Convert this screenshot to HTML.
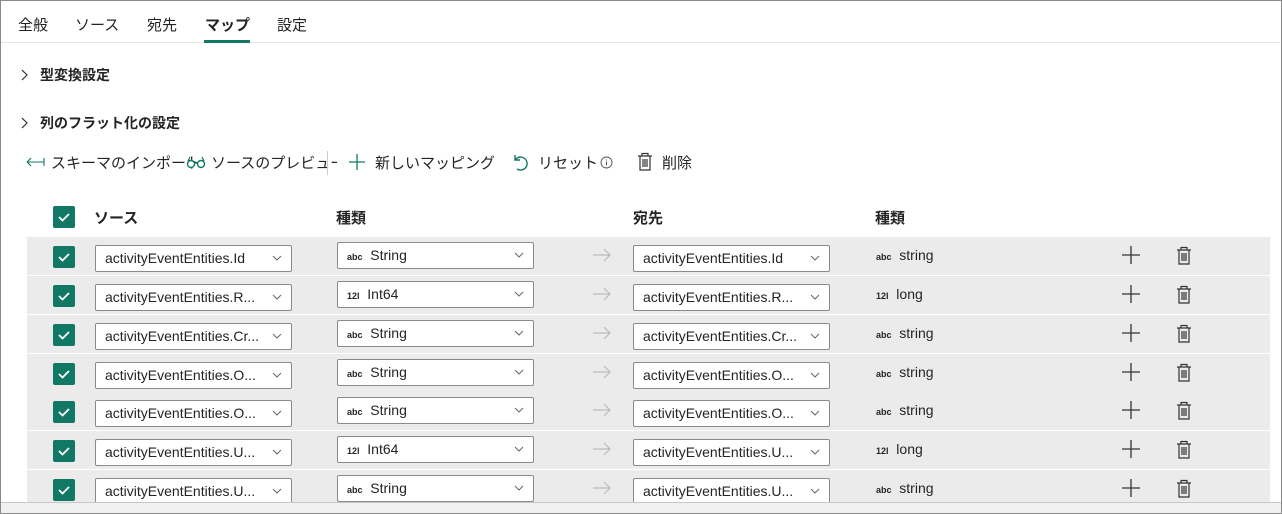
<!DOCTYPE html>
<html><head><meta charset="utf-8"><style>
*{box-sizing:border-box;margin:0;padding:0}
body{width:1282px;height:514px;overflow:hidden;background:#fff;font-family:"Liberation Sans","Noto Sans CJK JP",sans-serif;color:#242424;position:relative}
.frame{position:absolute;left:0;top:0;width:1282px;height:514px;border:1px solid #8a8a8a}
.a{position:absolute;white-space:nowrap}
.tab{font-size:15px;top:14px}
.row{position:absolute;left:27px;width:1243px;height:38px;background:#ebebeb}
.cb{position:absolute;left:26px;top:9px;width:22px;height:22px;background:#117865;border-radius:2px}
.cb svg{position:absolute;left:4px;top:5px}
.dd{position:absolute;width:197px;height:27px;background:#fff;border:1px solid #8a8a8a;border-radius:2px;font-size:14px;line-height:25px;padding-left:9px;color:#242424}
.dd .ch{position:absolute;right:9px;top:9px}
.ic{font-size:9px;font-weight:bold;letter-spacing:0}
</style></head><body>
<div class="frame"></div>
<div class="a tab" style="left:18px">全般</div>
<div class="a tab" style="left:75px">ソース</div>
<div class="a tab" style="left:147px">宛先</div>
<div class="a tab" style="left:205px;font-weight:bold">マップ</div>
<div class="a tab" style="left:277px">設定</div>
<div class="a" style="left:1px;top:42px;width:1280px;height:1px;background:#e6e6e6"></div>
<div class="a" style="left:204px;top:40px;width:46px;height:3px;background:#117865"></div>

<svg class="a" style="left:20px;top:68px" width="10" height="14"><path d="M2 2l5 5-5 5" fill="none" stroke="#333" stroke-width="1.2"/></svg>
<div class="a" style="left:40px;top:65px;font-size:14px;font-weight:bold">型変換設定</div>
<svg class="a" style="left:20px;top:116px" width="10" height="14"><path d="M2 2l5 5-5 5" fill="none" stroke="#333" stroke-width="1.2"/></svg>
<div class="a" style="left:40px;top:113px;font-size:14px;font-weight:bold">列のフラット化の設定</div>

<svg class="a" style="left:26px;top:156px" width="20" height="12"><path d="M1 6h17M1 6l4-4M1 6l4 4M18 2v8" fill="none" stroke="#117865" stroke-width="1.1"/></svg>
<div class="a" style="left:51px;top:152px;font-size:15px">スキーマのインポート</div>
<svg class="a" style="left:186px;top:155px" width="20" height="14"><circle cx="5" cy="9" r="3.5" fill="#fff" stroke="#117865" stroke-width="1.4"/><circle cx="15" cy="9" r="3.5" fill="#fff" stroke="#117865" stroke-width="1.4"/><path d="M8.5 8h3M2 6l2-4M18 6l-2-4" fill="none" stroke="#117865" stroke-width="1.2"/></svg>
<div class="a" style="left:211px;top:152px;font-size:15px;width:126px;overflow:hidden">ソースのプレビュー</div>
<div class="a" style="left:327px;top:151px;width:1px;height:24px;background:#ccc"></div>
<svg class="a" style="left:348px;top:153px" width="18" height="18"><path d="M9 1v16M1 9h16" stroke="#117865" stroke-width="1.3"/></svg>
<div class="a" style="left:375px;top:152px;font-size:15px">新しいマッピング</div>
<svg class="a" style="left:511px;top:153px" width="20" height="19"><path d="M4 2v5h5M4.5 6.5A6.5 6.5 0 1 1 6 16" fill="none" stroke="#117865" stroke-width="1.4"/></svg>
<div class="a" style="left:538px;top:152px;font-size:15px">リセット</div>
<svg class="a" style="left:600px;top:156px" width="13" height="13"><circle cx="6.5" cy="6.5" r="5.5" fill="none" stroke="#555" stroke-width="0.9"/><path d="M6.5 5.5v4M6.5 3.5v1" stroke="#555" stroke-width="1"/></svg>
<svg class="a" style="left:637px;top:152px" width="16" height="20"><path d="M1 4h14M5 4V1.5h6V4M3 4v14h10V4M6 7v8M8 7v8M10 7v8" fill="none" stroke="#333" stroke-width="1.2"/></svg>
<div class="a" style="left:662px;top:152px;font-size:15px">削除</div>

<div class="a cb" style="left:53px;top:206px"><svg width="14" height="12"><path d="M2 6l3.5 3.5L12 3" fill="none" stroke="#fff" stroke-width="1.8"/></svg></div>
<div class="a" style="left:94px;top:207px;font-size:15px;font-weight:bold">ソース</div>
<div class="a" style="left:336px;top:207px;font-size:15px;font-weight:bold">種類</div>
<div class="a" style="left:633px;top:207px;font-size:15px;font-weight:bold">宛先</div>
<div class="a" style="left:875px;top:207px;font-size:15px;font-weight:bold">種類</div>

<div id="rows"></div>
<script></script>
<!-- rows -->
<div class="row" style="top:237px"><div class="cb"><svg width="14" height="12"><path d="M2 6l3.5 3.5L12 3" fill="none" stroke="#fff" stroke-width="1.8"/></svg></div>
<div class="dd" style="left:68px;top:8px">activityEventEntities.Id<svg class="ch" width="10" height="7"><path d="M1 1l4 4 4-4" fill="none" stroke="#666"/></svg></div>
<div class="dd" style="left:310px;top:5px"><span class="ic">abc</span>&nbsp; String<svg class="ch" width="10" height="7"><path d="M1 1l4 4 4-4" fill="none" stroke="#666"/></svg></div>
<svg class="a" style="left:565px;top:11px" width="20" height="14"><path d="M1 7h17M12 1l6 6-6 6" fill="none" stroke="#bbb" stroke-width="1.2"/></svg>
<div class="dd" style="left:606px;top:8px">activityEventEntities.Id<svg class="ch" width="10" height="7"><path d="M1 1l4 4 4-4" fill="none" stroke="#666"/></svg></div>
<div class="a" style="left:849px;top:10px;font-size:14px"><span class="ic">abc</span>&nbsp; string</div>
<svg class="a" style="left:1095px;top:9px" width="18" height="18"><path d="M9 0v18M0 9h18" stroke="#333" stroke-width="1.3"/></svg>
<svg class="a" style="left:1149px;top:9px" width="16" height="20"><path d="M1 4h14M5 4V1.5h6V4M3 4v14h10V4M6 7v8M8 7v8M10 7v8" fill="none" stroke="#333" stroke-width="1.2"/></svg></div>

<div class="row" style="top:276px"><div class="cb"><svg width="14" height="12"><path d="M2 6l3.5 3.5L12 3" fill="none" stroke="#fff" stroke-width="1.8"/></svg></div>
<div class="dd" style="left:68px;top:8px">activityEventEntities.R...<svg class="ch" width="10" height="7"><path d="M1 1l4 4 4-4" fill="none" stroke="#666"/></svg></div>
<div class="dd" style="left:310px;top:5px"><span class="ic">12l</span>&nbsp; Int64<svg class="ch" width="10" height="7"><path d="M1 1l4 4 4-4" fill="none" stroke="#666"/></svg></div>
<svg class="a" style="left:565px;top:11px" width="20" height="14"><path d="M1 7h17M12 1l6 6-6 6" fill="none" stroke="#bbb" stroke-width="1.2"/></svg>
<div class="dd" style="left:606px;top:8px">activityEventEntities.R...<svg class="ch" width="10" height="7"><path d="M1 1l4 4 4-4" fill="none" stroke="#666"/></svg></div>
<div class="a" style="left:849px;top:10px;font-size:14px"><span class="ic">12l</span>&nbsp; long</div>
<svg class="a" style="left:1095px;top:9px" width="18" height="18"><path d="M9 0v18M0 9h18" stroke="#333" stroke-width="1.3"/></svg>
<svg class="a" style="left:1149px;top:9px" width="16" height="20"><path d="M1 4h14M5 4V1.5h6V4M3 4v14h10V4M6 7v8M8 7v8M10 7v8" fill="none" stroke="#333" stroke-width="1.2"/></svg></div>

<div class="row" style="top:315px"><div class="cb"><svg width="14" height="12"><path d="M2 6l3.5 3.5L12 3" fill="none" stroke="#fff" stroke-width="1.8"/></svg></div>
<div class="dd" style="left:68px;top:8px">activityEventEntities.Cr...<svg class="ch" width="10" height="7"><path d="M1 1l4 4 4-4" fill="none" stroke="#666"/></svg></div>
<div class="dd" style="left:310px;top:5px"><span class="ic">abc</span>&nbsp; String<svg class="ch" width="10" height="7"><path d="M1 1l4 4 4-4" fill="none" stroke="#666"/></svg></div>
<svg class="a" style="left:565px;top:11px" width="20" height="14"><path d="M1 7h17M12 1l6 6-6 6" fill="none" stroke="#bbb" stroke-width="1.2"/></svg>
<div class="dd" style="left:606px;top:8px">activityEventEntities.Cr...<svg class="ch" width="10" height="7"><path d="M1 1l4 4 4-4" fill="none" stroke="#666"/></svg></div>
<div class="a" style="left:849px;top:10px;font-size:14px"><span class="ic">abc</span>&nbsp; string</div>
<svg class="a" style="left:1095px;top:9px" width="18" height="18"><path d="M9 0v18M0 9h18" stroke="#333" stroke-width="1.3"/></svg>
<svg class="a" style="left:1149px;top:9px" width="16" height="20"><path d="M1 4h14M5 4V1.5h6V4M3 4v14h10V4M6 7v8M8 7v8M10 7v8" fill="none" stroke="#333" stroke-width="1.2"/></svg></div>

<div class="row" style="top:354px"><div class="cb"><svg width="14" height="12"><path d="M2 6l3.5 3.5L12 3" fill="none" stroke="#fff" stroke-width="1.8"/></svg></div>
<div class="dd" style="left:68px;top:8px">activityEventEntities.O...<svg class="ch" width="10" height="7"><path d="M1 1l4 4 4-4" fill="none" stroke="#666"/></svg></div>
<div class="dd" style="left:310px;top:5px"><span class="ic">abc</span>&nbsp; String<svg class="ch" width="10" height="7"><path d="M1 1l4 4 4-4" fill="none" stroke="#666"/></svg></div>
<svg class="a" style="left:565px;top:11px" width="20" height="14"><path d="M1 7h17M12 1l6 6-6 6" fill="none" stroke="#bbb" stroke-width="1.2"/></svg>
<div class="dd" style="left:606px;top:8px">activityEventEntities.O...<svg class="ch" width="10" height="7"><path d="M1 1l4 4 4-4" fill="none" stroke="#666"/></svg></div>
<div class="a" style="left:849px;top:10px;font-size:14px"><span class="ic">abc</span>&nbsp; string</div>
<svg class="a" style="left:1095px;top:9px" width="18" height="18"><path d="M9 0v18M0 9h18" stroke="#333" stroke-width="1.3"/></svg>
<svg class="a" style="left:1149px;top:9px" width="16" height="20"><path d="M1 4h14M5 4V1.5h6V4M3 4v14h10V4M6 7v8M8 7v8M10 7v8" fill="none" stroke="#333" stroke-width="1.2"/></svg></div>

<div class="row" style="top:392px"><div class="cb"><svg width="14" height="12"><path d="M2 6l3.5 3.5L12 3" fill="none" stroke="#fff" stroke-width="1.8"/></svg></div>
<div class="dd" style="left:68px;top:8px">activityEventEntities.O...<svg class="ch" width="10" height="7"><path d="M1 1l4 4 4-4" fill="none" stroke="#666"/></svg></div>
<div class="dd" style="left:310px;top:5px"><span class="ic">abc</span>&nbsp; String<svg class="ch" width="10" height="7"><path d="M1 1l4 4 4-4" fill="none" stroke="#666"/></svg></div>
<svg class="a" style="left:565px;top:11px" width="20" height="14"><path d="M1 7h17M12 1l6 6-6 6" fill="none" stroke="#bbb" stroke-width="1.2"/></svg>
<div class="dd" style="left:606px;top:8px">activityEventEntities.O...<svg class="ch" width="10" height="7"><path d="M1 1l4 4 4-4" fill="none" stroke="#666"/></svg></div>
<div class="a" style="left:849px;top:10px;font-size:14px"><span class="ic">abc</span>&nbsp; string</div>
<svg class="a" style="left:1095px;top:9px" width="18" height="18"><path d="M9 0v18M0 9h18" stroke="#333" stroke-width="1.3"/></svg>
<svg class="a" style="left:1149px;top:9px" width="16" height="20"><path d="M1 4h14M5 4V1.5h6V4M3 4v14h10V4M6 7v8M8 7v8M10 7v8" fill="none" stroke="#333" stroke-width="1.2"/></svg></div>

<div class="row" style="top:431px"><div class="cb"><svg width="14" height="12"><path d="M2 6l3.5 3.5L12 3" fill="none" stroke="#fff" stroke-width="1.8"/></svg></div>
<div class="dd" style="left:68px;top:8px">activityEventEntities.U...<svg class="ch" width="10" height="7"><path d="M1 1l4 4 4-4" fill="none" stroke="#666"/></svg></div>
<div class="dd" style="left:310px;top:5px"><span class="ic">12l</span>&nbsp; Int64<svg class="ch" width="10" height="7"><path d="M1 1l4 4 4-4" fill="none" stroke="#666"/></svg></div>
<svg class="a" style="left:565px;top:11px" width="20" height="14"><path d="M1 7h17M12 1l6 6-6 6" fill="none" stroke="#bbb" stroke-width="1.2"/></svg>
<div class="dd" style="left:606px;top:8px">activityEventEntities.U...<svg class="ch" width="10" height="7"><path d="M1 1l4 4 4-4" fill="none" stroke="#666"/></svg></div>
<div class="a" style="left:849px;top:10px;font-size:14px"><span class="ic">12l</span>&nbsp; long</div>
<svg class="a" style="left:1095px;top:9px" width="18" height="18"><path d="M9 0v18M0 9h18" stroke="#333" stroke-width="1.3"/></svg>
<svg class="a" style="left:1149px;top:9px" width="16" height="20"><path d="M1 4h14M5 4V1.5h6V4M3 4v14h10V4M6 7v8M8 7v8M10 7v8" fill="none" stroke="#333" stroke-width="1.2"/></svg></div>

<div class="row" style="top:470px;height:32px;overflow:hidden"><div class="cb"><svg width="14" height="12"><path d="M2 6l3.5 3.5L12 3" fill="none" stroke="#fff" stroke-width="1.8"/></svg></div>
<div class="dd" style="left:68px;top:8px">activityEventEntities.U...<svg class="ch" width="10" height="7"><path d="M1 1l4 4 4-4" fill="none" stroke="#666"/></svg></div>
<div class="dd" style="left:310px;top:5px"><span class="ic">abc</span>&nbsp; String<svg class="ch" width="10" height="7"><path d="M1 1l4 4 4-4" fill="none" stroke="#666"/></svg></div>
<svg class="a" style="left:565px;top:11px" width="20" height="14"><path d="M1 7h17M12 1l6 6-6 6" fill="none" stroke="#bbb" stroke-width="1.2"/></svg>
<div class="dd" style="left:606px;top:8px">activityEventEntities.U...<svg class="ch" width="10" height="7"><path d="M1 1l4 4 4-4" fill="none" stroke="#666"/></svg></div>
<div class="a" style="left:849px;top:10px;font-size:14px"><span class="ic">abc</span>&nbsp; string</div>
<svg class="a" style="left:1095px;top:9px" width="18" height="18"><path d="M9 0v18M0 9h18" stroke="#333" stroke-width="1.3"/></svg>
<svg class="a" style="left:1149px;top:9px" width="16" height="20"><path d="M1 4h14M5 4V1.5h6V4M3 4v14h10V4M6 7v8M8 7v8M10 7v8" fill="none" stroke="#333" stroke-width="1.2"/></svg></div>

<div class="a" style="left:1px;top:502px;width:1280px;height:11px;background:#f0f0f0;border-top:1px solid #c8c8c8"></div>
</body></html>
